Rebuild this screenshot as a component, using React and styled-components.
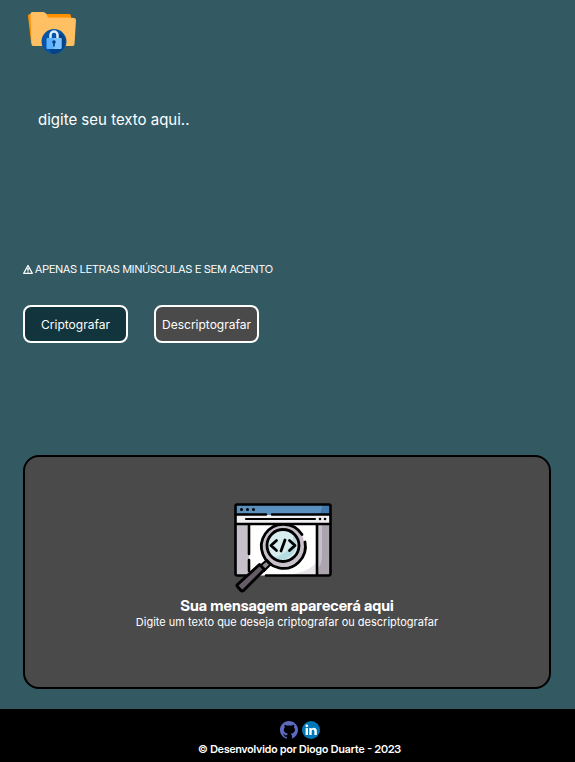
import React from "react";
import styled, { createGlobalStyle } from "styled-components";

const GlobalStyle = createGlobalStyle`
  * { box-sizing: border-box; margin: 0; padding: 0; }
  body {
    background: #335a62;
    color: #fff;
    font-family: Inter, sans-serif;
  }
`;

const Page = styled.div`
  display: flex;
  flex-direction: column;
  min-height: 100vh;
`;

const Header = styled.header`
  padding: 8px 27px 0;
  height: 88px;
`;

const LogoLink = styled.a`
  display: inline-block;
  svg { display: block; }
`;

const Main = styled.main`
  display: flex;
  flex-direction: column;
  flex: 1;
  padding: 0 24px 20px 23px;
`;

const MessageInput = styled.textarea`
  display: block;
  width: 100%;
  height: 160px;
  padding: 22px 15px;
  border: 0;
  outline: 0;
  resize: none;
  background: transparent;
  color: #fff;
  font: 400 15px/20px Inter, sans-serif;
  &::placeholder { color: #fff; opacity: 1; }
`;

const Notice = styled.p`
  display: flex;
  align-items: center;
  gap: 2px;
  margin-top: 12px;
  font-family: "Inter Display", Inter, sans-serif;
  font-size: 11px;
  line-height: 18px;
`;

const Actions = styled.div`
  display: flex;
  gap: 26px;
  margin-top: 27px;
`;

const ActionButton = styled.button`
  width: 105px;
  height: 38px;
  padding-top: 2px;
  border: 2px solid #fff;
  border-radius: 8px;
  background: ${({ $tone }) => ($tone === "dark" ? "#12343d" : "#4a4a4a")};
  color: #fff;
  font: 400 12px/16px Inter, sans-serif;
  white-space: nowrap;
  cursor: pointer;
`;

const ResultCard = styled.section`
  display: flex;
  flex: 1;
  flex-direction: column;
  align-items: center;
  margin-top: 112px;
  padding: 45px 16px 56px;
  border: 2px solid #000;
  border-radius: 16px;
  background: #4a4a4a;
  text-align: center;
`;

const Illustration = styled.div`
  padding-right: 8px;
  svg { display: block; }
`;

const ResultTitle = styled.h1`
  margin-top: 2px;
  font-family: "Inter Display", Inter, sans-serif;
  font-size: 15px;
  line-height: 18px;
  font-weight: 700;
`;

const ResultText = styled.p`
  font-size: 11px;
  line-height: 14px;
`;

const Footer = styled.footer`
  display: flex;
  flex-direction: column;
  align-items: center;
  padding: 12px 0 5px 24px;
  background: #000;
`;

const Socials = styled.nav`
  display: flex;
  gap: 4px;
`;

const SocialLink = styled.a`
  color: #5c6bc0;
  svg { display: block; }
`;

const Credit = styled.p`
  margin-top: 2px;
  font-family: "Inter Display", Inter, sans-serif;
  font-size: 11px;
  line-height: 16px;
  font-weight: 600;
`;

const FolderLock = () => (
  <svg width="50" height="48" viewBox="0 0 50 48" aria-hidden="true">
    <path d="M1 8Q1 6 3 6H42Q44 6 44 8V36H6Q4 36 4 34Z" fill="#ff9100" />
    <path d="M3.500 6Q3.500 4 5.500 4H16Q18 4 19 5.500L21 9.500H42L47 10Q49 10 49 12L47.500 36Q47.500 38 45.500 38H6Q4.500 38 4.500 36Z" fill="#ffc063" />
    <circle cx="27" cy="33.500" r="12.500" fill="#0754a4" />
    <path d="M34 25a12 12 0 0 1-9 21l-5-8Z" fill="#064384" />
    <path d="M23.500 31v-4a3.500 3.500 0 0 1 7 0v4" fill="none" stroke="#dceeff" strokeWidth="2.500" />
    <rect x="19.500" y="30" width="15" height="11" rx="1" fill="#5cb2ff" />
    <path d="M27 30h7.500v10l-1 1H27Z" fill="#7bc3ff" />
    <circle cx="27" cy="34" r="1.800" fill="#073f80" />
    <path d="M26.200 34h1.600v4.500h-1.600Z" fill="#073f80" />
  </svg>
);

const Warning = () => (
  <svg width="10" height="11" viewBox="0 0 10 11" aria-hidden="true">
    <path d="M5 1.500L9.300 9.300H0.700Z" fill="none" stroke="#fff" strokeWidth="1.300" strokeLinejoin="round" />
    <path d="M5 4v2.800M5 7.500v1" stroke="#fff" strokeWidth="1.500" />
  </svg>
);

const CodeSearch = () => (
  <svg width="100" height="93" viewBox="0 0 100 93" aria-hidden="true">
    <rect x="2.500" y="2.500" width="95" height="71" rx="1" fill="#fff" />
    <path d="M3 3H97V13H3Z" fill="#5a8fbe" />
    <path d="M89 3H97V13H86Q89 9 89 3Z" fill="#4379ad" />
    <path d="M3 13H97V22H3Z" fill="#f3f0f3" />
    <path d="M3 22H16V74H3ZM84 22H97V74H84Z" fill="#c7c0ca" />
    <path d="M89 22H97V74H84V67Q89 63 89 54Z" fill="#aca5b0" />
    <path d="M50 73Q73 72 83 61V73Z" fill="#e7e5e8" />
    <g fill="none" stroke="#000" strokeWidth="2.600" strokeLinecap="round" strokeLinejoin="round">
      <path d="M33 73.500H95.500Q97.500 73.500 97.500 71.500V4Q97.500 2.500 96 2.500H4Q2.500 2.500 2.500 4V71.500Q2.500 73.500 4.500 73.500H18" />
      <path d="M3 12.500H33M39 12.500H97M3 22H97M16 22V52M16 58V69M84 22V73" />
      <path d="M13 17H82" strokeWidth="2.200" />
    </g>
    <g>
      <circle cx="8.500" cy="7.500" r="1.500" />
      <circle cx="14.500" cy="7.500" r="1.500" />
      <circle cx="20.500" cy="7.500" r="1.500" />
      <circle cx="87" cy="17" r="1.300" />
      <circle cx="92" cy="17" r="1.300" />
    </g>
    <circle cx="50" cy="43.500" r="21.500" fill="#c8c0ca" />
    <circle cx="50" cy="43.500" r="16" fill="#d8edef" />
    <path d="M60 32Q62 49 40 56A16 16 0 0 0 60 32Z" fill="#b5dce1" />
    <path d="M34 58L27 64L31 69L38 62Z" fill="#918a94" stroke="#000" strokeWidth="2" />
    <path d="M26.500 62.500L4.500 82.500Q3.500 83.500 4.500 84.500L8 88.500Q9 89.500 10.500 88.500L31.500 67.500Z" fill="#655d66" stroke="#000" strokeWidth="3" strokeLinejoin="round" />
    <g fill="none" stroke="#000" strokeWidth="2.800" strokeLinecap="round" strokeLinejoin="round">
      <path d="M72 40A22 22 0 1 1 69 32.500" />
      <circle cx="50" cy="43.500" r="16" />
      <path d="M43.500 38.500L38 43.500L43.500 48.500M56.500 38.500L62 43.500L56.500 48.500M52 38L48 49" />
    </g>
  </svg>
);

const GitHub = () => (
  <svg width="18" height="18" viewBox="3 3 24 24" fill="currentColor" aria-hidden="true">
    <path d="M15,3C8.373,3,3,8.373,3,15c0,5.623,3.872,10.328,9.092,11.630C12.036,26.468,12,26.280,12,26.047v-2.051c-0.487,0-1.303,0-1.508,0c-0.821,0-1.551-0.353-1.905-1.009c-0.393-0.729-0.461-1.844-1.435-2.526c-0.289-0.227-0.069-0.486,0.264-0.451c0.615,0.174,1.125,0.596,1.605,1.222c0.478,0.627,0.703,0.769,1.596,0.769c0.433,0,1.081-0.025,1.691-0.121c0.328-0.833,0.895-1.600,1.588-1.962c-3.996-0.411-5.903-2.399-5.903-5.098c0-1.162,0.495-2.286,1.336-3.233C9.053,10.647,8.706,8.730,9.435,8c1.798,0,2.885,1.166,3.146,1.481C13.477,9.174,14.461,9,15.495,9c1.036,0,2.024,0.174,2.922,0.483C18.675,9.170,19.763,8,21.565,8c0.732,0.731,0.381,2.656,0.102,3.594c0.836,0.945,1.328,2.066,1.328,3.226c0,2.697-1.904,4.684-5.894,5.097C18.199,20.490,19,22.100,19,23.313v2.734c0,0.104-0.023,0.179-0.035,0.268C23.641,24.676,27,20.236,27,15C27,8.373,21.627,3,15,3z" />
  </svg>
);

const LinkedIn = () => (
  <svg width="18" height="18" viewBox="0 0 18 18" aria-hidden="true">
    <circle cx="9" cy="9" r="9" fill="#0077b7" />
    <circle cx="4.800" cy="4.800" r="1.400" fill="#fff" />
    <path d="M3.600 7H6V14H3.600ZM7.300 7H9.600V8C11 6 14.800 6.500 14.800 10V14H12.400V10.300C12.400 8.200 9.700 8.200 9.700 10.300V14H7.300Z" fill="#fff" />
  </svg>
);

export default function App() {
  return (
    <>
      <GlobalStyle />
      <Page>
        <Header>
          <LogoLink href="#" aria-label="Início"><FolderLock /></LogoLink>
        </Header>
        <Main>
          <MessageInput aria-label="Texto" placeholder="digite seu texto aqui.." />
          <Notice><Warning />APENAS LETRAS MINÚSCULAS E SEM ACENTO</Notice>
          <Actions>
            <ActionButton type="button" $tone="dark">Criptografar</ActionButton>
            <ActionButton type="button" $tone="gray">Descriptografar</ActionButton>
          </Actions>
          <ResultCard>
            <Illustration><CodeSearch /></Illustration>
            <ResultTitle>Sua mensagem aparecerá aqui</ResultTitle>
            <ResultText>Digite um texto que deseja criptografar ou descriptografar</ResultText>
          </ResultCard>
        </Main>
        <Footer>
          <Socials aria-label="Redes sociais">
            <SocialLink href="#" aria-label="GitHub"><GitHub /></SocialLink>
            <SocialLink href="#" aria-label="LinkedIn"><LinkedIn /></SocialLink>
          </Socials>
          <Credit>© Desenvolvido por Diogo Duarte - 2023</Credit>
        </Footer>
      </Page>
    </>
  );
}
